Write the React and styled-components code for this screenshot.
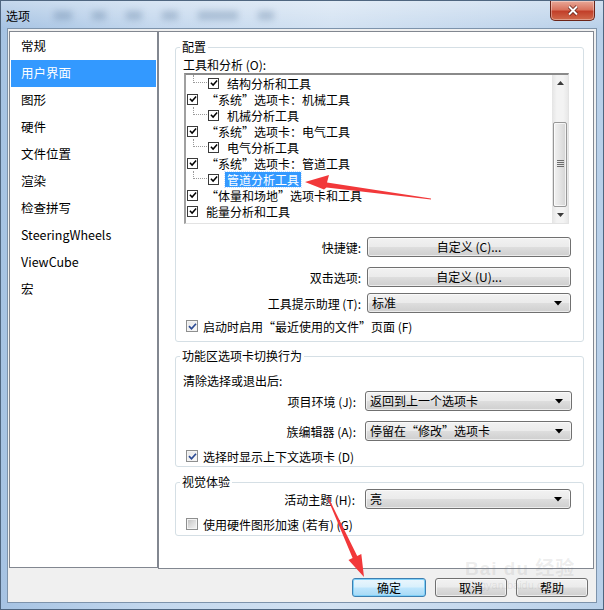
import React from "react";
import styled, { createGlobalStyle } from "styled-components";

const GlobalStyle = createGlobalStyle`
  html, body { margin: 0; padding: 0; background: #fff; }
  body {
    font-family: "Noto Sans CJK SC", "Noto Sans", sans-serif;
    font-size: 12px;
    color: #000;
  }
  #root { width: 604px; height: 610px; }
`;

const Window = styled.div`
  position: relative;
  width: 604px;
  height: 610px;
  box-sizing: border-box;
  display: flex;
  flex-direction: column;
  border: 1px solid #4f6680;
  background: linear-gradient(90deg, #a6c3e3 0%, #c3d7ed 25%, #d3e2f2 55%, #b9d0e9 100%);
  overflow: hidden;
`;

const TitleBar = styled.div`
  height: 27px;
  display: flex;
  align-items: flex-start;
  background: linear-gradient(180deg, rgba(255,255,255,0.35), rgba(255,255,255,0));
`;

const Title = styled.div`
  align-self: center;
  padding-left: 5px;
  font-size: 12px;
  line-height: 16px;
  margin-top: 2px;
`;

const Ghosts = styled.div`
  align-self: center;
  display: flex;
  gap: 20px;
  margin-left: 24px;
  margin-top: 2px;
`;

const Ghost = styled.span`
  width: ${p => p.$w}px;
  height: 9px;
  background: rgba(70, 100, 140, 0.28);
  filter: blur(3px);
`;

const CloseBtn = styled.div`
  margin-left: auto;
  margin-right: 8px;
  width: 45px;
  height: 20px;
  box-sizing: border-box;
  border: 1px solid #6b2418;
  border-top: none;
  border-radius: 0 0 5px 5px;
  background: linear-gradient(180deg, #e8a898 0%, #d9745f 45%, #c2402a 55%, #d06a4c 100%);
  box-shadow: inset 0 0 0 1px rgba(255, 255, 255, 0.35);
  display: flex;
  align-items: center;
  justify-content: center;
`;

const Body = styled.div`
  flex: 1;
  display: flex;
  padding: 0 6px 6px 6px;
`;

const Client = styled.div`
  flex: 1;
  display: flex;
  flex-direction: column;
  border: 1px solid #7d93ab;
  background: #f0f0f0;
  padding: 2px 2px 0 1px;
`;

const Main = styled.div`
  display: flex;
  align-items: flex-start;
  height: 538px;
`;

const NavList = styled.div`
  width: 149px;
  height: 537px;
  box-sizing: border-box;
  border: 1px solid #828790;
  background: #fff;
  padding: 1px;
`;

const NavItem = styled.div`
  height: 27px;
  line-height: 26px;
  padding-left: 10px;
  font-size: 12.5px;
  color: ${p => (p.$active ? "#fff" : "#000")};
  background: ${p => (p.$active ? "#3399ff" : "transparent")};
`;

const Panel = styled.div`
  width: 436px;
  height: 538px;
  box-sizing: border-box;
  border: 1px solid #828790;
  background: #fff;
  padding: 7px 9px 0 16px;
  display: flex;
  flex-direction: column;
`;

const Group = styled.fieldset`
  margin: ${p => p.$mt || 0}px 0 0 0;
  padding: 0 11px ${p => p.$pb || 0}px 7px;
  border: 1px solid #d5dfe5;
  border-radius: 3px;
  min-width: 0;
`;

const Legend = styled.legend`
  padding: 0 2px;
  margin-left: -3px;
  font-size: 12px;
  line-height: 16px;
`;

const Caption = styled.div`
  margin-top: ${p => p.$mt || 0}px;
  line-height: 16px;
  height: 16px;
`;

const Tree = styled.div`
  margin: 0 0 0 1px;
  width: 385px;
  height: 151px;
  box-sizing: border-box;
  border-style: solid;
  border-width: 2px 1px 1px 2px;
  border-color: #8a8a8a #e3e3e3 #e3e3e3 #a0a0a0;
  display: flex;
  background: #fff;
`;

const TreeRows = styled.div`
  flex: 1;
  display: flex;
  flex-direction: column;
`;

const TreeRow = styled.div`
  height: 16px;
  display: flex;
  align-items: center;
  padding-left: ${p => (p.$child ? 7 : 1)}px;
`;

const Connector = styled.span`
  align-self: flex-start;
  width: 14px;
  height: 8px;
  box-sizing: border-box;
  border-left: 1px dotted #9a9a9a;
  border-bottom: 1px dotted #9a9a9a;
  margin-right: 1px;
`;

const TreeBox = styled.span`
  width: 11px;
  height: 11px;
  box-sizing: border-box;
  border: 1px solid #3a3a3a;
  background: #fff;
  display: flex;
  align-items: center;
  justify-content: center;
`;

const TreeLabel = styled.span`
  margin-left: 6px;
  padding: 0 2px;
  line-height: 15px;
  height: 15px;
  white-space: nowrap;
  color: ${p => (p.$sel ? "#fff" : "#000")};
  background: ${p => (p.$sel ? "#3399ff" : "transparent")};
  outline: ${p => (p.$sel ? "1px dotted #c9e0ff" : "none")};
`;

const ScrollBar = styled.div`
  width: 16px;
  display: flex;
  flex-direction: column;
  background: linear-gradient(90deg, #e4e4e4, #f3f3f3 30%, #f3f3f3 70%, #e8e8e8);
`;

const ScrollArrow = styled.div`
  height: 17px;
  display: flex;
  align-items: center;
  justify-content: center;
`;

const ScrollTrack = styled.div`
  flex: 1;
  display: flex;
  flex-direction: column;
  align-items: center;
`;

const Thumb = styled.div`
  width: 14px;
  box-sizing: border-box;
  border: 1px solid #979797;
  border-radius: 2px;
  background: linear-gradient(90deg, #f2f2f2 0%, #e4e4e4 50%, #d4d4d4 100%);
  box-shadow: inset 0 0 0 1px rgba(255, 255, 255, 0.7);
  display: flex;
  align-items: center;
  justify-content: center;
`;

const FormRow = styled.div`
  display: grid;
  grid-template-columns: 1fr ${p => p.$w || 204}px;
  column-gap: ${p => p.$gap || 6}px;
  align-items: center;
  height: 20px;
  margin-top: ${p => p.$mt || 0}px;
  padding-right: ${p => p.$pr ?? 1}px;
`;

const Label = styled.span`
  text-align: right;
  white-space: nowrap;
`;

const Control = styled.div`
  height: 20px;
  box-sizing: border-box;
  border: 1px solid #707070;
  border-radius: 3px;
  background: linear-gradient(180deg, #f2f2f2 0%, #ebebeb 48%, #dddddd 52%, #cfcfcf 100%);
  box-shadow: inset 0 0 0 1px rgba(255, 255, 255, 0.6);
  display: flex;
  align-items: center;
  justify-content: ${p => (p.$select ? "space-between" : "center")};
  padding: ${p => (p.$select ? "0 8px 0 4px" : "0")};
  line-height: 16px;
  white-space: nowrap;
`;

const CheckRow = styled.label`
  display: flex;
  align-items: center;
  height: 16px;
  margin-top: ${p => p.$mt || 0}px;
  padding-left: 3px;
  gap: 5px;
  white-space: nowrap;
`;

const CheckBox = styled.span`
  width: 12px;
  height: 12px;
  box-sizing: border-box;
  border: 1px solid #8e8f8f;
  background: ${p =>
    p.$on
      ? "linear-gradient(135deg, #e6e6e6, #fbfbfb)"
      : "linear-gradient(135deg, #bdbdbd 0%, #dcdcdc 50%, #f4f4f4 100%)"};
  box-shadow: inset 0 0 0 1px #f4f4f4;
  display: flex;
  align-items: center;
  justify-content: center;
`;

const Footer = styled.div`
  flex: 1;
  display: flex;
  justify-content: flex-end;
  align-items: flex-start;
  gap: 9px;
  padding: 9px 6px 0 0;
`;

const DlgButton = styled.div`
  width: ${p => p.$w}px;
  height: 19px;
  box-sizing: border-box;
  border: 1px solid ${p => (p.$default ? "#3c7fb1" : "#707070")};
  border-radius: 3px;
  background: ${p =>
    p.$default
      ? "linear-gradient(180deg, #eaf6fd 0%, #d9f0fc 48%, #bee6fd 52%, #a7d9f5 100%)"
      : "linear-gradient(180deg, #f2f2f2 0%, #ebebeb 48%, #dddddd 52%, #cfcfcf 100%)"};
  box-shadow: inset 0 0 0 1px ${p => (p.$default ? "#7fd0f8" : "rgba(255,255,255,0.6)")};
  display: flex;
  align-items: center;
  justify-content: center;
  line-height: 16px;
`;

const Overlay = styled.svg`
  position: absolute;
  left: 0;
  top: 0;
  pointer-events: none;
`;

const Watermark = styled.div`
  position: absolute;
  left: 464px;
  top: 558px;
  pointer-events: none;
  color: rgba(120, 120, 120, 0.14);
  white-space: nowrap;
  display: flex;
  flex-direction: column;
  align-items: flex-start;
`;

const MarkBig = styled.div`
  font-family: "Liberation Sans", "Noto Sans CJK SC", sans-serif;
  font-size: 19px;
  font-weight: bold;
  line-height: 20px;
  letter-spacing: 1px;
`;

const MarkSmall = styled.div`
  font-family: "Liberation Sans", sans-serif;
  font-size: 11px;
  line-height: 12px;
  margin-left: 4px;
`;

const Tick = ({ color = "#000", size = 9 }) => (
  <svg width={size} height={size} viewBox="0 0 9 9">
    <path d="M1 4.2 L3.5 6.8 L8 1.8" fill="none" stroke={color} strokeWidth="1.7" />
  </svg>
);

const DownTri = () => (
  <svg width="8" height="5" viewBox="0 0 8 5">
    <path d="M0 0 H8 L4 4.5 Z" fill="#000" />
  </svg>
);

const navItems = ["常规", "用户界面", "图形", "硬件", "文件位置", "渲染", "检查拼写", "SteeringWheels", "ViewCube", "宏"];

const treeItems = [
  { text: "结构分析和工具", child: true },
  { text: "“系统”选项卡：机械工具" },
  { text: "机械分析工具", child: true },
  { text: "“系统”选项卡：电气工具" },
  { text: "电气分析工具", child: true },
  { text: "“系统”选项卡：管道工具" },
  { text: "管道分析工具", child: true, sel: true },
  { text: "“体量和场地”选项卡和工具" },
  { text: "能量分析和工具" },
];

function Check({ on, children, mt }) {
  return (
    <CheckRow $mt={mt}>
      <CheckBox $on={on}>{on && <Tick color="#2c4b94" size={9} />}</CheckBox>
      {children}
    </CheckRow>
  );
}

export default function App() {
  return (
    <>
      <GlobalStyle />
      <Window>
        <TitleBar>
          <Title>选项</Title>
          <Ghosts>
            {[18, 14, 16, 16, 40, 16].map((w, i) => (
              <Ghost key={i} $w={w} />
            ))}
          </Ghosts>
          <CloseBtn>
            <svg width="12" height="11" viewBox="0 0 12 11">
              <path d="M2 1.5 L10 9.5 M10 1.5 L2 9.5" stroke="#5a1a10" strokeWidth="3.4" />
              <path d="M2 1.5 L10 9.5 M10 1.5 L2 9.5" stroke="#fff" strokeWidth="2" />
            </svg>
          </CloseBtn>
        </TitleBar>
        <Body>
          <Client>
            <Main>
              <NavList>
                {navItems.map(t => (
                  <NavItem key={t} $active={t === "用户界面"}>{t}</NavItem>
                ))}
              </NavList>
              <Panel>
                <Group $pb={7}>
                  <Legend>配置</Legend>
                  <Caption $mt={2}>工具和分析 (O):</Caption>
                  <Tree>
                    <TreeRows>
                      {treeItems.map(it => (
                        <TreeRow key={it.text} $child={it.child}>
                          {it.child && <Connector />}
                          <TreeBox><Tick size={8} /></TreeBox>
                          <TreeLabel $sel={it.sel}>{it.text}</TreeLabel>
                        </TreeRow>
                      ))}
                    </TreeRows>
                    <ScrollBar>
                      <ScrollArrow>
                        <svg width="7" height="4" viewBox="0 0 7 4"><path d="M0 4 L3.5 0 L7 4 Z" fill="#3a3a3a" /></svg>
                      </ScrollArrow>
                      <ScrollTrack>
                        <Thumb style={{ marginTop: 30, height: 85 }}>
                          <svg width="7" height="8" viewBox="0 0 7 8">
                            <path d="M0 0.5 H7 M0 2.5 H7 M0 4.5 H7 M0 6.5 H7" stroke="#6d6d6d" strokeWidth="1" />
                          </svg>
                        </Thumb>
                      </ScrollTrack>
                      <ScrollArrow>
                        <svg width="7" height="4" viewBox="0 0 7 4"><path d="M0 0 L7 0 L3.5 4 Z" fill="#3a3a3a" /></svg>
                      </ScrollArrow>
                    </ScrollBar>
                  </Tree>
                  <FormRow $mt={13}>
                    <Label>快捷键:</Label>
                    <Control>自定义 (C)...</Control>
                  </FormRow>
                  <FormRow $mt={10}>
                    <Label>双击选项:</Label>
                    <Control>自定义 (U)...</Control>
                  </FormRow>
                  <FormRow $mt={6}>
                    <Label>工具提示助理 (T):</Label>
                    <Control $select>
                      <span>标准</span>
                      <DownTri />
                    </Control>
                  </FormRow>
                  <Check on mt={5}>启动时启用“最近使用的文件”页面 (F)</Check>
                </Group>

                <Group $mt={6} $pb={2}>
                  <Legend>功能区选项卡切换行为</Legend>
                  <Caption $mt={9}>清除选择或退出后:</Caption>
                  <FormRow $mt={2} $w={207} $gap={9} $pr={0}>
                    <Label>项目环境 (J):</Label>
                    <Control $select>
                      <span>返回到上一个选项卡</span>
                      <DownTri />
                    </Control>
                  </FormRow>
                  <FormRow $mt={10} $w={207} $gap={9} $pr={0}>
                    <Label>族编辑器 (A):</Label>
                    <Control $select>
                      <span>停留在“修改”选项卡</span>
                      <DownTri />
                    </Control>
                  </FormRow>
                  <Check on mt={7}>选择时显示上下文选项卡 (D)</Check>
                </Group>

                <Group $mt={7} $pb={3}>
                  <Legend>视觉体验</Legend>
                  <FormRow $mt={-1} $w={206} $gap={10}>
                    <Label>活动主题 (H):</Label>
                    <Control $select>
                      <span>亮</span>
                      <DownTri />
                    </Control>
                  </FormRow>
                  <Check mt={7}>使用硬件图形加速 (若有) (G)</Check>
                </Group>
              </Panel>
            </Main>
            <Footer>
              <DlgButton $w={74} $default>确定</DlgButton>
              <DlgButton $w={72}>取消</DlgButton>
              <DlgButton $w={72}>帮助</DlgButton>
            </Footer>
          </Client>
        </Body>

        <Watermark>
          <MarkBig>Bai du 经验</MarkBig>
          <MarkSmall>jingyan.baidu.com</MarkSmall>
        </Watermark>

        <Overlay width="604" height="610" viewBox="0 0 604 610">
          <polygon
            points="304,181 328,174 326,181.5 430,197.4 430,198.6 325.5,186.5 323,188.5"
            fill="#f2383a"
          />
          <polygon
            points="363,576 347.5,558.9 351.6,557 326.5,497.2 327.5,496.8 356.2,555 360.3,553.1"
            fill="#f2383a"
          />
        </Overlay>
      </Window>
    </>
  );
}
